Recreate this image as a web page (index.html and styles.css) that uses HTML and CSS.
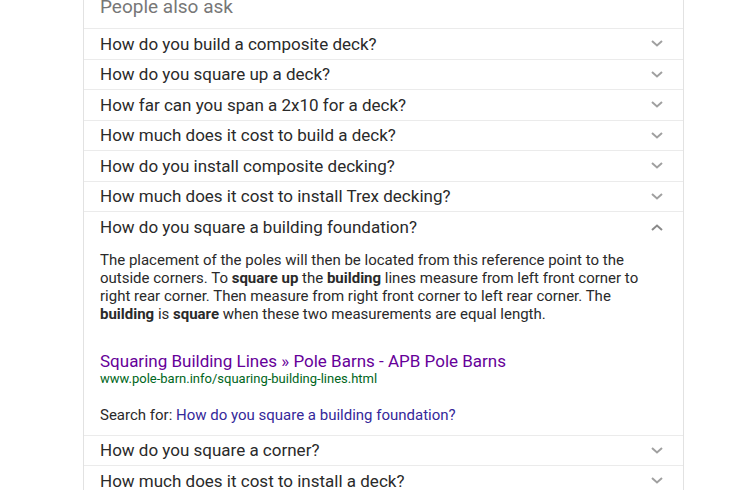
FILE: index.html
```html
<!DOCTYPE html>
<html lang="en">
<head>
    <meta charset="UTF-8">
    <meta name="viewport" content="width=device-width, initial-scale=1.0">
    <title>People also ask</title>
    <link rel="stylesheet" href="styles.css">
</head>
<body>
    <div class="paa-card">
        <div class="paa-header">People also ask</div>

        <div class="paa-row">
            <span class="paa-question">How do you build a composite deck?</span>
            <svg class="chevron" viewBox="0 0 12 7"><polyline points="1,1 6,5.5 11,1"/></svg>
        </div>
        <div class="paa-row">
            <span class="paa-question">How do you square up a deck?</span>
            <svg class="chevron" viewBox="0 0 12 7"><polyline points="1,1 6,5.5 11,1"/></svg>
        </div>
        <div class="paa-row">
            <span class="paa-question">How far can you span a 2x10 for a deck?</span>
            <svg class="chevron" viewBox="0 0 12 7"><polyline points="1,1 6,5.5 11,1"/></svg>
        </div>
        <div class="paa-row">
            <span class="paa-question">How much does it cost to build a deck?</span>
            <svg class="chevron" viewBox="0 0 12 7"><polyline points="1,1 6,5.5 11,1"/></svg>
        </div>
        <div class="paa-row">
            <span class="paa-question">How do you install composite decking?</span>
            <svg class="chevron" viewBox="0 0 12 7"><polyline points="1,1 6,5.5 11,1"/></svg>
        </div>
        <div class="paa-row">
            <span class="paa-question">How much does it cost to install Trex decking?</span>
            <svg class="chevron" viewBox="0 0 12 7"><polyline points="1,1 6,5.5 11,1"/></svg>
        </div>

        <!-- Expanded question -->
        <div class="paa-item open">
            <div class="paa-row-head">
                <span class="paa-question">How do you square a building foundation?</span>
                <svg class="chevron up" viewBox="0 0 12 7"><polyline points="1,6 6,1.5 11,6"/></svg>
            </div>
            <div class="paa-answer">
                <p class="answer-text">The placement of the poles will then be located from this reference point to the outside corners. To <b>square up</b> the <b>building</b> lines measure from left front corner to right rear corner. Then measure from right front corner to left rear corner. The <b>building</b> is <b>square</b> when these two measurements are equal length.</p>
                <a class="result-title" href="#">Squaring Building Lines » Pole Barns - APB Pole Barns</a>
                <div class="result-url">www.pole-barn.info/squaring-building-lines.html</div>
                <div class="search-for">Search for: <a href="#">How do you square a building foundation?</a></div>
            </div>
        </div>

        <div class="paa-row">
            <span class="paa-question">How do you square a corner?</span>
            <svg class="chevron" viewBox="0 0 12 7"><polyline points="1,1 6,5.5 11,1"/></svg>
        </div>
        <div class="paa-row">
            <span class="paa-question">How much does it cost to install a deck?</span>
            <svg class="chevron" viewBox="0 0 12 7"><polyline points="1,1 6,5.5 11,1"/></svg>
        </div>
    </div>
</body>
</html>
```

FILE: styles.css
```css
/* Basic reset */
* {
    margin: 0;
    padding: 0;
    box-sizing: border-box;
}

body {
    font-family: Roboto, "Liberation Sans", Arial, sans-serif;
    background-color: #fff;
    color: #222;
    overflow: hidden;
}

.paa-card {
    margin-left: 83px;
    width: 601px;
    border-left: 1px solid #e2e2e2;
    border-right: 1px solid #e2e2e2;
}

.paa-header {
    height: 32px;
    margin-top: -3px;
    padding: 0 16px;
    font-size: 19px;
    line-height: 19px;
    color: #777;
    border-bottom: 1px solid #ebebeb;
}

.paa-row,
.paa-row-head {
    display: flex;
    align-items: center;
    justify-content: space-between;
    height: 30.5px;
    padding: 0 20px 0 16px;
}

.paa-row,
.paa-item {
    border-bottom: 1px solid #ebebeb;
}

.paa-question {
    font-size: 17px;
    color: #2a2a2a;
}

.chevron {
    width: 12px;
    height: 7px;
    fill: none;
    stroke: #a0a0a0;
    stroke-width: 2;
}

.chevron.up {
    stroke: #8a8a8a;
}

.paa-answer {
    padding: 8px 16px 11px;
}

.answer-text {
    font-size: 15px;
    line-height: 18px;
    color: #2a2a2a;
}

.answer-text b {
    font-weight: bold;
}

.result-title {
    display: block;
    margin-top: 28px;
    font-size: 17px;
    line-height: 20px;
    color: #660099;
    text-decoration: none;
}

.result-url {
    font-size: 13px;
    line-height: 16px;
    color: #006621;
}

.search-for {
    margin-top: 19px;
    font-size: 15px;
    line-height: 18px;
    color: #2a2a2a;
}

.search-for a {
    color: #35289a;
    text-decoration: none;
}
```
